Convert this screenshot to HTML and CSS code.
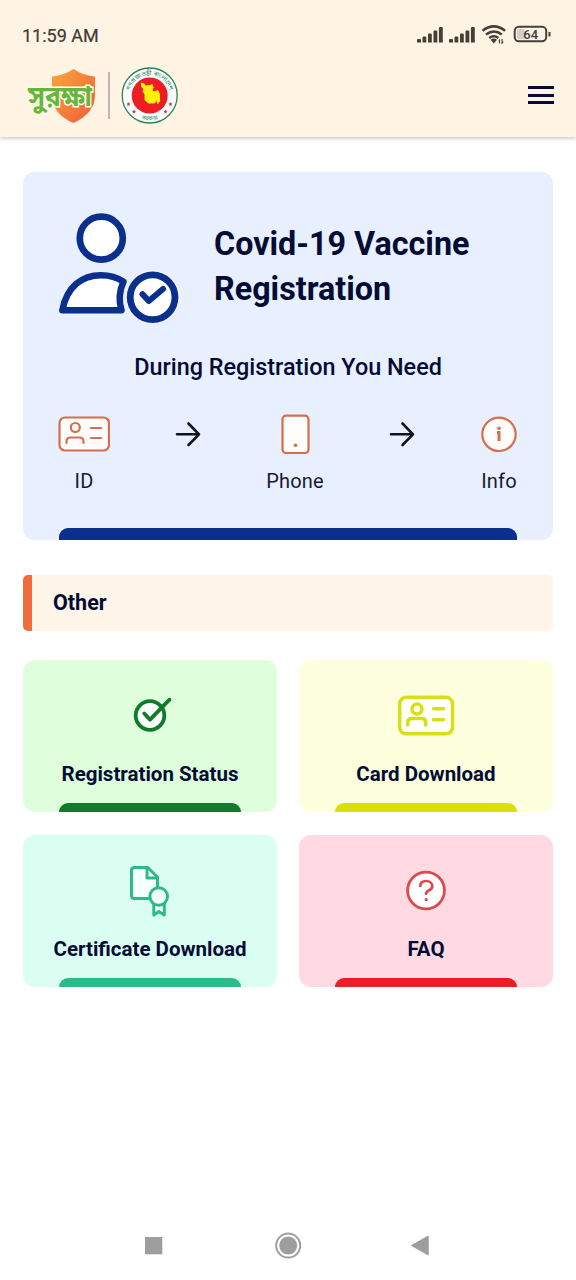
FILE: index.html
```html
<!DOCTYPE html>
<html lang="en">
<head>
<meta charset="utf-8">
<meta name="viewport" content="width=device-width, initial-scale=1">
<title>Surokkha</title>
<link rel="stylesheet" href="styles.css">
</head>
<body>
<div class="screen">
  <header class="header">
    <div class="status">
      <span class="clock">11:59 AM</span>
      <svg class="status-icons" width="136" height="24" viewBox="416 22 136 24">
        <g fill="#463f38">
          <path id="bars" d="M417 42.500v-2.500q0-1 1-1h2q1 0 1 1v2.500zM422.500 42.500v-5q0-1 1-1h1.800q1 0 1 1v5zM428 42.500v-8q0-1 1-1h1.800q1 0 1 1v8zM433.500 42.500v-11q0-1 1-1h1.800q1 0 1 1v11zM438.900 42.500v-14.500q0-1 1-1h1.900q1 0 1 1v14.500z"/>
          <use href="#bars" x="32"/>
          <path d="M490.500 39.800q3.300-2.800 6.500 0l-3.200 3.700zM498.300 40.700l1.800-2.200v5h-1.200v-2.800zM501.500 39h1.200v2.800h1.200l-1.800 2.200h-.6z"/>
        </g>
        <g fill="none" stroke="#463f38">
          <path stroke-width="2.500" d="M482.500 30.700q11.300-8.700 22.600 0M486 34.500q7.900-6 15.800 0M489.200 38q4.700-3.500 9.200 0"/>
          <rect x="514.700" y="26.700" width="31.500" height="14.600" rx="4.200" stroke-width="2"/>
          <path d="M549.500 32v4.500" stroke-width="2"/>
        </g>
        <rect x="517" y="29" width="8" height="10" rx="1.500" fill="#d6cec4"/>
        <text x="530.700" y="38.800" class="battery">64</text>
      </svg>
    </div>
    <div class="brandbar">
      <svg class="brand" width="158" height="62" viewBox="24 65 158 62">
        <defs>
          <linearGradient id="shield" x1="0" y1="0" x2="1" y2="1"><stop offset="0" stop-color="#f8a63c"/><stop offset="1" stop-color="#f15d38"/></linearGradient>
          <path id="arcTop" d="M129.400 98.500a20.500 20.500 0 1 1 40.600 0"/>
          <path id="arcBottom" d="M131.500 112.500a25 25 0 0 0 36.400 0"/>
          <path id="star" d="M0-2l.6 1.300 1.500.1L1 .4l.4 1.500L0 1.200l-1.400.7L-1 .4l-1.100-1 1.500-.1z"/>
        </defs>
        <path d="M73.500 69Q84 76 95 76.500V95q0 18-21.500 28Q52 114 52 95V76.500Q63 76 73.500 69z" fill="url(#shield)"/>
        <text x="28" y="105.500" class="wordmark" textLength="64" lengthAdjust="spacingAndGlyphs">সুরক্ষা</text>
        <path d="M109 72v47" stroke="#c3b7b1" stroke-width="2"/>
        <circle cx="149.700" cy="95.500" r="27.500" fill="#fff" stroke="#25865a" stroke-width="1.300"/>
        <circle cx="149.700" cy="95.500" r="18" fill="#ee1c25"/>
        <path d="M141.300 83l3.200 1 .7 2 4-.2 3-1.200 1 2.800-1.300 3.400 2 1.200 4-1.500 1.300 3.300.5 7.500-2 2.300-1.500-4.500-1.500 4-3-.2-3 .2-3.700-3.200v-5.500l-2-3 .8-2.500-2-2z" fill="#fff20a" stroke="#fff20a"/>
        <g class="seal">
          <text><textPath href="#arcTop" startOffset="50%" text-anchor="middle">গণপ্রজাতন্ত্রী বাংলাদেশ</textPath></text>
          <text><textPath href="#arcBottom" startOffset="50%" text-anchor="middle">সরকার</textPath></text>
        </g>
        <g fill="#d9383b"><use href="#star" x="128.500" y="104"/><use href="#star" x="134" y="111.500"/><use href="#star" x="165.500" y="111.500"/><use href="#star" x="170.500" y="104"/></g>
      </svg>
      <div class="menu"><i></i><i></i><i></i></div>
    </div>
  </header>

  <main class="content">
    <section class="hero">
      <div class="hero-head">
        <svg width="122" height="112" viewBox="58 212 122 112" fill="#fff" stroke="#0b2f8d" stroke-linecap="round" stroke-linejoin="round">
          <circle cx="101.300" cy="238.200" r="21.500" stroke-width="6.700"/>
          <path stroke-width="6.500" d="M62.300 310.300C67 286.500 82 275.200 101 275.200q13 0 22.500 6.500-6.500 14 -2 28.600z"/>
          <circle cx="152.600" cy="297.200" r="25" stroke="#eef3ff" stroke-width="5"/>
          <circle cx="152.600" cy="297.200" r="22.400" stroke-width="6.800"/>
          <path fill="none" stroke-width="6" d="M142.500 294.300l6.300 6.700 14.200-12"/>
        </svg>
        <h1>Covid-19 Vaccine<br>Registration</h1>
      </div>
      <h2>During Registration You Need</h2>
      <div class="steps">
        <div class="step">
          <svg width="52" height="42" viewBox="58 413 52 42" class="orange">
            <rect x="59.500" y="417.500" width="49.500" height="33" rx="5.500"/>
            <g fill="none"><circle cx="75.300" cy="427.500" r="4.500"/><path d="M66.500 443v-1.500q0-4 4-4h9q4 0 4 4v1.500M91 428h10M91 438h10"/></g>
          </svg><span>ID</span>
        </div>
        <svg class="arrow" width="26" height="42" viewBox="0 0 26 42"><path d="M2 21.300h22M13.500 10.500L24 21.300 13.500 32"/></svg>
        <div class="step">
          <svg width="30" height="42" viewBox="280 413 30 42" class="orange"><rect x="282.500" y="415.700" width="26" height="37.300" rx="3.500"/><path d="M295.500 445.300h.01" stroke-width="3.500"/></svg><span>Phone</span>
        </div>
        <svg class="arrow" width="26" height="42" viewBox="0 0 26 42"><path d="M2 21.300h22M13.500 10.500L24 21.300 13.500 32"/></svg>
        <div class="step">
          <svg width="38" height="42" viewBox="480 413 38 42" class="orange"><circle cx="499" cy="434.300" r="16.700"/><path d="M497 432.500h2v8.500" stroke-width="3" stroke-linecap="butt" stroke-linejoin="miter"/><path d="M499 428.300h.01" stroke-width="3.500"/></svg><span>Info</span>
        </div>
      </div>
      <div class="tab"></div>
    </section>

    <h3 class="section-title">Other</h3>

    <div class="grid">
      <section class="card green">
        <svg width="60" height="60" viewBox="120 685 60 60" fill="#fff" stroke="#107b2a" stroke-linecap="round" stroke-linejoin="round" stroke-width="3.800">
          <circle cx="150" cy="715.500" r="14.300"/><path fill="none" d="M144.300 713.500l5.700 6.200 19.500-20"/>
        </svg>
        <h4>Registration Status</h4><div class="tab"></div>
      </section>
      <section class="card yellow">
        <svg width="60" height="60" viewBox="396 685 60 60" fill="#fffffb" stroke="#d8df17" stroke-linecap="round" stroke-linejoin="round" stroke-width="3.500">
          <rect x="399.700" y="697.300" width="52.800" height="36.500" rx="6.500"/>
          <g fill="none"><circle cx="417" cy="709" r="5"/><path d="M407.700 725v-2.500q0-4 4-4h10q4 0 4 4v2.500M433.500 708.700h10M433.500 719.800h10"/></g>
        </svg>
        <h4>Card Download</h4><div class="tab"></div>
      </section>
      <section class="card mint">
        <svg width="60" height="60" viewBox="120 860 60 60" fill="#f5fffc" stroke="#2dba89" stroke-linecap="round" stroke-linejoin="round" stroke-width="3">
          <path d="M134.500 867.500h13.300l9.700 9.700v21.300h-23q-3 0-3-3v-25q0-3 3-3z"/><path fill="none" d="M147 867.500v10.500h10"/>
          <path d="M153.800 903v12l5-3.500 5.500 3.500v-12z"/><circle cx="158.700" cy="896.500" r="8.800"/>
        </svg>
        <h4>Certificate Download</h4><div class="tab"></div>
      </section>
      <section class="card pink">
        <svg width="60" height="60" viewBox="396 860 60 60" fill="#fff" stroke="#df484c" stroke-linecap="round" stroke-linejoin="round" stroke-width="2.800">
          <circle cx="426" cy="890.500" r="18.400"/><path fill="none" stroke-width="2.700" d="M420.300 886c0-3.300 2.500-5 6-5 3.300 0 6 2.200 6 5.500 0 4.300-6.200 3.200-6.200 7.300"/><path d="M426.200 899.700h.01" stroke-width="3.200"/>
        </svg>
        <h4>FAQ</h4><div class="tab"></div>
      </section>
    </div>
  </main>

  <nav class="navbar">
    <svg width="576" height="30" viewBox="0 1230 576 30" fill="#9e9e9e">
      <rect x="145" y="1237" width="17.300" height="17.300"/>
      <circle cx="288.200" cy="1245.600" r="9"/><circle cx="288.200" cy="1245.600" r="12" fill="none" stroke="#9e9e9e" stroke-width="2"/>
      <path d="M411.500 1245.500l16.700-9.500v19z" stroke="#9e9e9e" stroke-linejoin="round"/>
    </svg>
  </nav>
</div>
</body>
</html>
```

FILE: styles.css
```css
* { box-sizing: border-box; }
body { margin: 0; background: #fff; font-family: Roboto, "Noto Sans", sans-serif; color: #020c35; }
svg { display: block; flex: none; }
h1, h2, h3, h4 { margin: 0; }
.screen { width: 576px; height: 1280px; display: flex; flex-direction: column; }
.header { height: 137px; background: #fff3e4; box-shadow: 0 1px 4px rgba(40, 30, 80, .3); padding: 22px 22px 0; }
.status { height: 24px; display: flex; justify-content: space-between; align-items: center; }
.status-icons { margin-right: 2px; }
.clock { font-size: 18px; color: #403a35; -webkit-text-stroke: .2px #403a35; padding-top: 2px; }
.battery { font: 500 13px Roboto, sans-serif; fill: #403a35; text-anchor: middle; }
.brandbar { display: flex; justify-content: space-between; align-items: center; height: 62px; margin-top: 19px; }
.brand { margin-left: 2px; }
.wordmark { font: bold 29px "Noto Sans Bengali", "Noto Sans", sans-serif; fill: #66b63b; stroke: #fffbed; stroke-width: 3px; paint-order: stroke; }
.seal { font: 6px "Noto Sans Bengali", "Noto Sans", sans-serif; fill: #25865a; }
.menu { width: 26px; display: grid; gap: 4.500px; margin-bottom: 2px; }
.menu i { height: 3px; background: #020c35; }
.content { padding: 35px 23px 0; flex: 1; }
.hero { height: 368px; padding: 40px 36px 0; background: #e8effe; border-radius: 11px; display: flex; flex-direction: column; overflow: hidden; }
.hero-head { display: flex; gap: 34px; height: 112px; margin-left: -1px; }
h1 { font-size: 32.300px; line-height: 45px; font-weight: 700; padding-top: 10px; white-space: nowrap; }
h2 { margin-top: 29px; font-size: 23.400px; line-height: 28px; font-weight: 500; text-align: center; white-space: nowrap; }
.steps { display: flex; justify-content: space-between; margin: 32px -1px 0; }
.step { display: flex; flex-direction: column; align-items: center; font-size: 20px; line-height: 24px; gap: 14px; color: #171b2e; letter-spacing: .2px; }
.orange { fill: #fffdfb; stroke: #d66d4b; stroke-width: 2.200px; stroke-linecap: round; stroke-linejoin: round; }
.arrow { fill: none; stroke: #10131e; stroke-width: 2.600px; stroke-linecap: round; stroke-linejoin: round; }
.hero > .tab { height: 12px; margin-top: auto; background: #0b2f8d; border-radius: 9px 9px 0 0; }
.section-title { margin: 35px 0 29px; height: 56px; border-left: 9px solid #f16b3c; border-radius: 5px; background: #fff5e9; padding-left: 21px; font-size: 21.500px; line-height: 56px; font-weight: 700; }
.grid { display: grid; grid-template-columns: 254px 254px; justify-content: space-between; row-gap: 23px; }
.card { height: 152px; border-radius: 12px; padding-top: 25px; display: flex; flex-direction: column; align-items: center; overflow: hidden; }
.card h4 { font-size: 20.500px; line-height: 24px; font-weight: 700; margin-top: 17px; white-space: nowrap; }
.card .tab { width: 182px; height: 9px; margin-top: auto; border-radius: 9px 9px 0 0; }
.green { background: #dfffdc; }
.green .tab { background: #107b2a; }
.yellow { background: #feffdc; }
.yellow .tab { background: #dadf06; }
.mint { background: #dafff2; }
.mint .tab { background: #2dba89; }
.pink { background: #ffdae2; }
.pink .tab { background: #ed1d24; }
.navbar { height: 50px; }
```
